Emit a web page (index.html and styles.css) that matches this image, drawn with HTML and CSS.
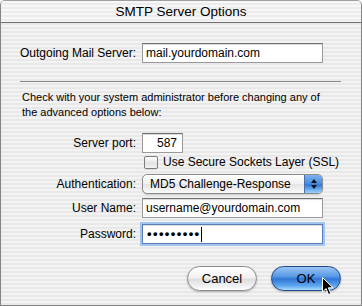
FILE: index.html
```html
<!DOCTYPE html>
<html lang="en">
<head>
  <meta charset="UTF-8" />
  <title>SMTP Server Options</title>
  <link rel="stylesheet" href="styles.css">
</head>
<body>
  <div class="window">
    <div class="titlebar">SMTP Server Options</div>

    <div class="content">
      <div class="row row-first">
        <label class="label" for="server">Outgoing Mail Server:</label>
        <input class="field" id="server" type="text" value="mail.yourdomain.com" />
      </div>

      <div class="separator"></div>

      <p class="note">Check with your system administrator before changing any of the advanced options below:</p>

      <div class="row row-port">
        <label class="label" for="port">Server port:</label>
        <input class="field field-port" id="port" type="text" value="587" />
      </div>

      <div class="row row-check">
        <span></span>
        <div class="check">
          <span class="checkbox"></span>
          <span>Use Secure Sockets Layer (SSL)</span>
        </div>
      </div>

      <div class="row row-auth">
        <span class="label">Authentication:</span>
        <div class="popup">
          <span class="popup-text">MD5 Challenge-Response</span>
          <span class="popup-arrows">
            <span class="arrow-up"></span>
            <span class="arrow-down"></span>
          </span>
        </div>
      </div>

      <div class="row row-user">
        <label class="label" for="user">User Name:</label>
        <input class="field" id="user" type="text" value="username@yourdomain.com" />
      </div>

      <div class="row row-pass">
        <span class="label">Password:</span>
        <div class="field field-focus"><span class="dots">&#8226;&#8226;&#8226;&#8226;&#8226;&#8226;&#8226;&#8226;&#8226;</span><span class="caret"></span></div>
      </div>

      <div class="buttons">
        <div class="btn btn-cancel">Cancel</div>
        <div class="btn btn-ok">OK</div>
      </div>
    </div>

    <svg class="pointer" width="12" height="19" viewBox="0 0 12 19">
      <path d="M0.5 0.5 L0.5 15 L4 11.5 L6.5 17.5 L8.8 16.5 L6.3 10.8 L11 10.8 Z" fill="#000" stroke="#fff" stroke-width="1" />
    </svg>
  </div>
</body>
</html>
```

FILE: styles.css
```css
html, body {
  margin: 0;
  padding: 0;
  background: #fff;
}
body {
  font-family: 'Liberation Sans', Arial, sans-serif;
  font-size: 12px;
  color: #000;
}
.window {
  position: relative;
  width: 362px;
  height: 306px;
  box-sizing: border-box;
  border: 1px solid #858585;
  border-top-color: #a0a0a0;
  border-radius: 5px 5px 0 0;
  overflow: hidden;
  background: repeating-linear-gradient(to bottom, #f3f3f3 0, #f3f3f3 2px, #e8e8e8 2px, #e8e8e8 4px);
}
.titlebar {
  height: 21px;
  line-height: 21px;
  text-align: center;
  font-size: 13.5px;
  border-bottom: 1px solid #6e6e6e;
  background: repeating-linear-gradient(to bottom, #f7f7f7 0, #f7f7f7 2px, #ececec 2px, #ececec 4px);
}
.content {
  display: flex;
  flex-direction: column;
}
.row {
  display: grid;
  grid-template-columns: 135px 181px;
  column-gap: 6px;
  align-items: center;
}
.row-first { margin-top: 20px; }
.row-port { margin-top: 13px; }
.row-check {
  margin-top: 2px;
  grid-template-columns: 135px auto;
}
.row-auth { margin-top: 5px; }
.row-user { margin-top: 4px; }
.row-pass { margin-top: 6px; }
.label {
  text-align: right;
}
.field {
  height: 20px;
  box-sizing: border-box;
  border: 1px solid #9a9a9a;
  border-top-color: #6f6f6f;
  background: #fff;
  box-shadow: inset 0 1px 1px rgba(0, 0, 0, 0.15);
  font-family: inherit;
  font-size: 12px;
  padding: 0 3px;
  margin: 0;
  outline: none;
  color: #000;
}
.field-port {
  width: 41px;
  text-align: right;
  padding-right: 5px;
}
.field-focus {
  display: flex;
  align-items: center;
  padding-left: 4px;
  border: 1px solid #5a7fb8;
  box-shadow: 0 0 0 2px #a3c4ec, inset 0 1px 1px rgba(0, 0, 0, 0.15);
}
.dots {
  font-size: 13px;
  letter-spacing: 1.4px;
  font-weight: bold;
  line-height: 14px;
}
.caret {
  width: 1px;
  height: 15px;
  background: #000;
}
.separator {
  margin: 18px 0 0 19px;
  width: 321px;
  height: 1px;
  background: #8a8a8a;
}
.note {
  margin: 8px 0 0 21px;
  width: 306px;
  font-size: 11px;
  line-height: 15px;
}
.check {
  display: flex;
  align-items: center;
  gap: 5px;
  line-height: 14px;
  padding-left: 2px;
  white-space: nowrap;
}
.checkbox {
  width: 12px;
  height: 11px;
  border: 1px solid #7d7d7d;
  border-radius: 2px;
  background: linear-gradient(to bottom, #ffffff, #e2e2e2 60%, #f4f4f4);
  box-shadow: 0 1px 0 rgba(0, 0, 0, 0.1);
}
.popup {
  display: flex;
  height: 20px;
  box-sizing: border-box;
  border: 1px solid #8a8a8a;
  border-radius: 5px;
  overflow: hidden;
  background: linear-gradient(to bottom, #ffffff, #f0f0f0 50%, #e4e4e4 51%, #fafafa);
  box-shadow: 0 1px 1px rgba(0, 0, 0, 0.15);
}
.popup-text {
  flex: 1;
  padding-left: 7px;
  line-height: 18px;
}
.popup-arrows {
  width: 17px;
  border-left: 1px solid #4a6ea8;
  background: linear-gradient(to bottom, #7fb1ec, #4b8ee2 45%, #3279d8 55%, #9cd2fb);
  display: flex;
  flex-direction: column;
  align-items: center;
  justify-content: center;
  gap: 2px;
}
.arrow-up {
  width: 0;
  height: 0;
  border-left: 3px solid transparent;
  border-right: 3px solid transparent;
  border-bottom: 4px solid #111;
}
.arrow-down {
  width: 0;
  height: 0;
  border-left: 3px solid transparent;
  border-right: 3px solid transparent;
  border-top: 4px solid #111;
}
.buttons {
  display: flex;
  justify-content: flex-end;
  gap: 14px;
  margin: 22px 20px 0 0;
}
.btn {
  width: 70px;
  height: 25px;
  box-sizing: border-box;
  border-radius: 13px;
  text-align: center;
  line-height: 23px;
  font-size: 13px;
  box-shadow: 0 1px 2px rgba(0, 0, 0, 0.25);
}
.btn-cancel {
  border: 1px solid #8a8a8a;
  background: linear-gradient(to bottom, #ffffff, #f2f2f2 45%, #dedede 55%, #f6f6f6 90%, #ffffff);
}
.btn-ok {
  border: 1px solid #24498a;
  background: linear-gradient(to bottom, #9ac4f2, #5a9be6 40%, #2f76d6 52%, #5fa8f0 82%, #a9dcff);
}
.pointer {
  position: absolute;
  left: 321px;
  top: 276px;
}
```
